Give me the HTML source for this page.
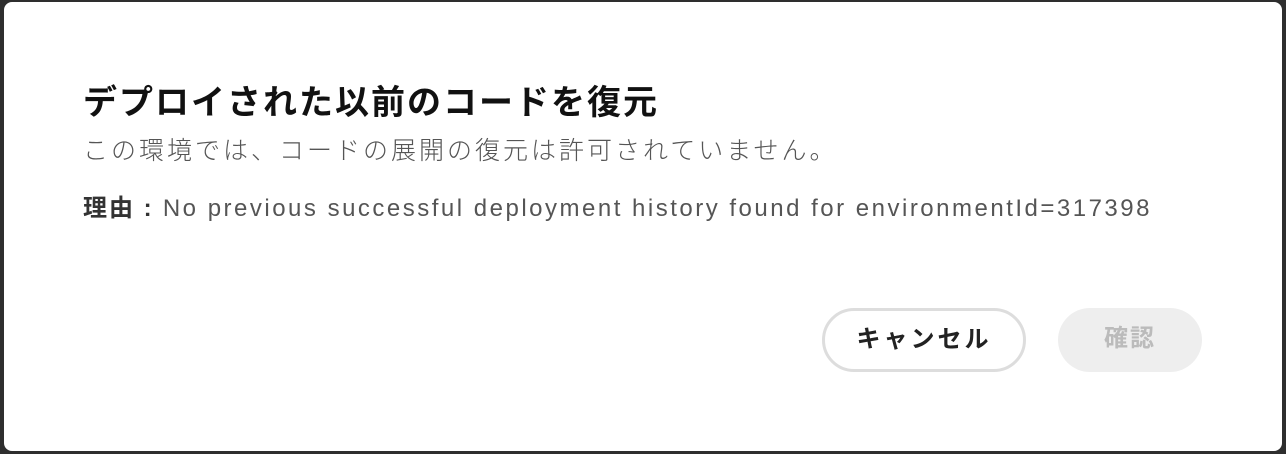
<!DOCTYPE html>
<html><head><meta charset="utf-8"><style>
html,body{margin:0;padding:0;width:1286px;height:454px;background:#2e2e2e;overflow:hidden}
body{font-family:"Liberation Sans","Noto Sans CJK JP",sans-serif}
.m{position:absolute;left:4px;top:2px;width:1278px;height:449px;background:#fff;border-radius:8px}
.t{position:absolute;left:79px;top:79px;font-size:34px;font-weight:bold;color:#111;letter-spacing:2px;white-space:nowrap;line-height:44px}
.s{position:absolute;left:79px;top:131px;font-size:25px;color:#555;letter-spacing:3px;white-space:nowrap;line-height:36px;font-weight:300}
.r{position:absolute;left:79px;top:189px;font-size:24px;color:#555;white-space:nowrap;line-height:36px;letter-spacing:2.5px}
.r b{color:#333;letter-spacing:2px}
.b1{position:absolute;left:818px;top:306px;width:198px;height:58px;border:3px solid #ddd;border-radius:32px;box-sizing:content-box;text-align:center;line-height:58px;font-size:24px;font-weight:bold;color:#222;letter-spacing:3px}
.b2{position:absolute;left:1054px;top:306px;width:144px;height:64px;background:#eee;border-radius:32px;text-align:center;line-height:62px;font-size:24px;font-weight:bold;color:#bbb;letter-spacing:2px}
</style></head><body>
<div class="m">
<div class="t">デプロイされた以前のコードを復元</div>
<div class="s">この環境では、コードの展開の復元は許可されていません。</div>
<div class="r"><b>理由 :</b> No previous successful deployment history found for environmentId=317398</div>
<div class="b1">キャンセル</div>
<div class="b2">確認</div>
</div>
</body></html>
